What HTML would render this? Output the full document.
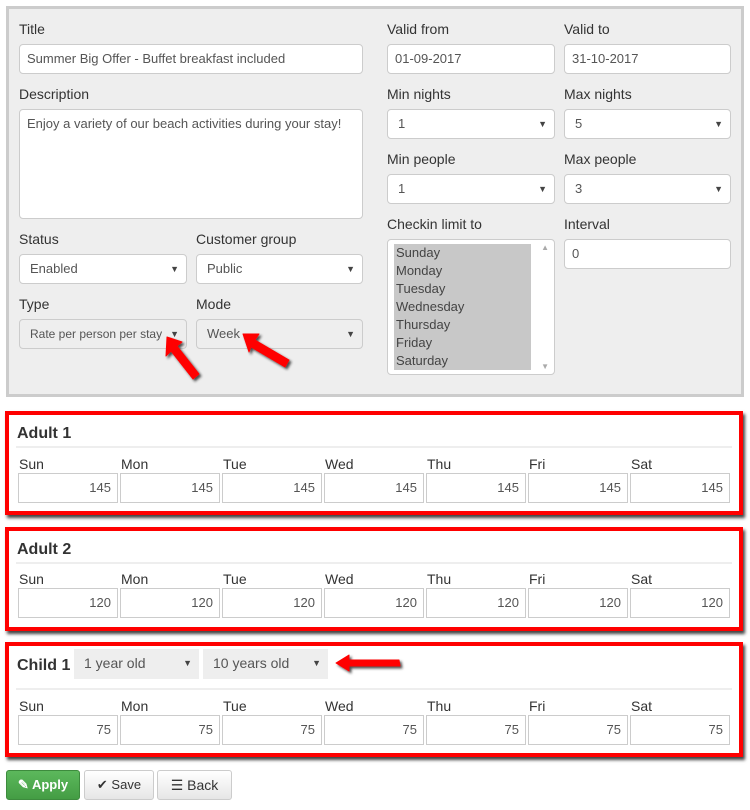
<!DOCTYPE html>
<html><head><style>
*{box-sizing:border-box;margin:0;padding:0}
body{width:750px;height:810px;background:#fff;font-family:"Liberation Sans",sans-serif;position:relative;overflow:hidden;color:#333}
.a{position:absolute}
.lbl{position:absolute;font-size:14px;color:#333;line-height:16px}
.in{position:absolute;background:#fff;border:1px solid #ccc;border-radius:4px;font-size:13px;color:#555;padding:0 7px;line-height:28px;height:30px;white-space:nowrap;overflow:hidden}
.sel::after{content:"▼";position:absolute;right:7px;top:0;font-size:9px;color:#444}
.dis{background:#eee}
.box{position:absolute;left:5px;width:738px;border:4px solid #f00;box-shadow:2px 3px 3px #444;background:#fff}
.h{position:absolute;left:8px;font-weight:bold;font-size:16px;color:#333}
.rule{position:absolute;left:7px;right:7px;height:2px;background:#eee}
.d{position:absolute;font-size:14px;color:#333;line-height:16px}
.v{position:absolute;height:30px;border:1px solid #ccc;background:#fff;font-size:13px;color:#555;text-align:right;padding-right:6px;line-height:28px;width:100px}
.btn{position:absolute;top:770px;height:30px;border:1px solid #ccc;border-radius:3px;background:linear-gradient(#fff,#e6e6e6);font-size:13px;line-height:28px;text-align:center;color:#333}
</style></head><body>
<div class="a" style="left:6px;top:6px;width:738px;height:391px;background:#eee;border:3px solid #ccc"></div>

<div class="lbl" style="left:19px;top:21px">Title</div>
<div class="in" style="left:19px;top:44px;width:344px">Summer Big Offer - Buffet breakfast included</div>
<div class="lbl" style="left:19px;top:86px">Description</div>
<div class="in" style="left:19px;top:109px;width:344px;height:110px;line-height:28px">Enjoy a variety of our beach activities during your stay!</div>
<div class="lbl" style="left:19px;top:231px">Status</div>
<div class="in sel" style="left:19px;top:254px;width:168px;padding-left:10px">Enabled</div>
<div class="lbl" style="left:196px;top:231px">Customer group</div>
<div class="in sel" style="left:196px;top:254px;width:167px;padding-left:10px">Public</div>
<div class="lbl" style="left:19px;top:296px">Type</div>
<div class="in sel dis" style="left:19px;top:319px;width:168px;padding-left:10px;font-size:12px">Rate per person per stay</div>
<div class="lbl" style="left:196px;top:296px">Mode</div>
<div class="in sel dis" style="left:196px;top:319px;width:167px;padding-left:10px">Week</div>

<div class="lbl" style="left:387px;top:21px">Valid from</div>
<div class="in" style="left:387px;top:44px;width:168px">01-09-2017</div>
<div class="lbl" style="left:564px;top:21px">Valid to</div>
<div class="in" style="left:564px;top:44px;width:167px">31-10-2017</div>
<div class="lbl" style="left:387px;top:86px">Min nights</div>
<div class="in sel" style="left:387px;top:109px;width:168px;padding-left:10px">1</div>
<div class="lbl" style="left:564px;top:86px">Max nights</div>
<div class="in sel" style="left:564px;top:109px;width:167px;padding-left:10px">5</div>
<div class="lbl" style="left:387px;top:151px">Min people</div>
<div class="in sel" style="left:387px;top:174px;width:168px;padding-left:10px">1</div>
<div class="lbl" style="left:564px;top:151px">Max people</div>
<div class="in sel" style="left:564px;top:174px;width:167px;padding-left:10px">3</div>
<div class="lbl" style="left:387px;top:216px">Checkin limit to</div>
<div class="a" style="left:387px;top:239px;width:168px;height:136px;background:#fff;border:1px solid #ccc;border-radius:4px">
  <div class="a" style="left:6px;top:4px;width:137px;height:126px;background:#c8c8c8;font-size:13px;color:#444;line-height:18px;padding-left:2px">Sunday<br>Monday<br>Tuesday<br>Wednesday<br>Thursday<br>Friday<br>Saturday</div>
  <div class="a" style="right:5px;top:3px;font-size:8px;color:#aaa">▲</div>
  <div class="a" style="right:5px;bottom:3px;font-size:8px;color:#aaa">▼</div>
</div>
<div class="lbl" style="left:564px;top:216px">Interval</div>
<div class="in" style="left:564px;top:239px;width:167px">0</div>

<div class="box" style="top:411px;height:104px">
 <div class="h" style="top:10px">Adult 1</div><div class="rule" style="top:31px"></div>
 <div class="d" style="left:10px;top:41px">Sun</div><div class="d" style="left:112px;top:41px">Mon</div><div class="d" style="left:214px;top:41px">Tue</div><div class="d" style="left:316px;top:41px">Wed</div><div class="d" style="left:418px;top:41px">Thu</div><div class="d" style="left:520px;top:41px">Fri</div><div class="d" style="left:622px;top:41px">Sat</div>
 <div class="v" style="left:9px;top:58px">145</div><div class="v" style="left:111px;top:58px">145</div><div class="v" style="left:213px;top:58px">145</div><div class="v" style="left:315px;top:58px">145</div><div class="v" style="left:417px;top:58px">145</div><div class="v" style="left:519px;top:58px">145</div><div class="v" style="left:621px;top:58px">145</div>
</div>
<div class="box" style="top:527px;height:104px">
 <div class="h" style="top:10px">Adult 2</div><div class="rule" style="top:31px"></div>
 <div class="d" style="left:10px;top:40px">Sun</div><div class="d" style="left:112px;top:40px">Mon</div><div class="d" style="left:214px;top:40px">Tue</div><div class="d" style="left:316px;top:40px">Wed</div><div class="d" style="left:418px;top:40px">Thu</div><div class="d" style="left:520px;top:40px">Fri</div><div class="d" style="left:622px;top:40px">Sat</div>
 <div class="v" style="left:9px;top:57px">120</div><div class="v" style="left:111px;top:57px">120</div><div class="v" style="left:213px;top:57px">120</div><div class="v" style="left:315px;top:57px">120</div><div class="v" style="left:417px;top:57px">120</div><div class="v" style="left:519px;top:57px">120</div><div class="v" style="left:621px;top:57px">120</div>
</div>
<div class="box" style="top:642px;height:115px">
 <div class="h" style="top:11px">Child 1</div>
 <div class="in sel" style="left:65px;top:3px;width:125px;border:0;border-radius:0;background:#eee;font-size:14px;padding-left:10px">1 year old</div>
 <div class="in sel" style="left:194px;top:3px;width:125px;border:0;border-radius:0;background:#eee;font-size:14px;padding-left:10px">10 years old</div>
 <div class="rule" style="top:42px"></div>
 <div class="d" style="left:10px;top:52px">Sun</div><div class="d" style="left:112px;top:52px">Mon</div><div class="d" style="left:214px;top:52px">Tue</div><div class="d" style="left:316px;top:52px">Wed</div><div class="d" style="left:418px;top:52px">Thu</div><div class="d" style="left:520px;top:52px">Fri</div><div class="d" style="left:622px;top:52px">Sat</div>
 <div class="v" style="left:9px;top:69px">75</div><div class="v" style="left:111px;top:69px">75</div><div class="v" style="left:213px;top:69px">75</div><div class="v" style="left:315px;top:69px">75</div><div class="v" style="left:417px;top:69px">75</div><div class="v" style="left:519px;top:69px">75</div><div class="v" style="left:621px;top:69px">75</div>
</div>

<div class="btn" style="left:6px;width:74px;background:linear-gradient(#5cb85c,#449d44);border-color:#3d8b3d;color:#fff;font-weight:bold">&#9998; Apply</div>
<div class="btn" style="left:84px;width:70px">&#10004; Save</div>
<div class="btn" style="left:157px;width:75px;font-size:14px">&#9776; Back</div>

<svg class="a" style="left:0;top:0" width="750" height="810">
 <defs><filter id="s"><feDropShadow dx="2" dy="2" stdDeviation="1.2" flood-color="#222" flood-opacity="0.8"/></filter></defs>
 <g fill="#f00" stroke="#f00" stroke-width="1" filter="url(#s)" stroke-linejoin="round">
  <path d="M167 337 L182 342 L177 346 L199 374 L193 379 L171 351 L166 356 Z"/>
  <path d="M243 334 L259 334 L255 340 L289 360 L285 367 L251 347 L249 352 Z"/>
  <path d="M336 663 L349 655 L349 660 L399 660 L400 666 L349 666 L349 671 Z"/>
 </g>
</svg>
</body></html>
